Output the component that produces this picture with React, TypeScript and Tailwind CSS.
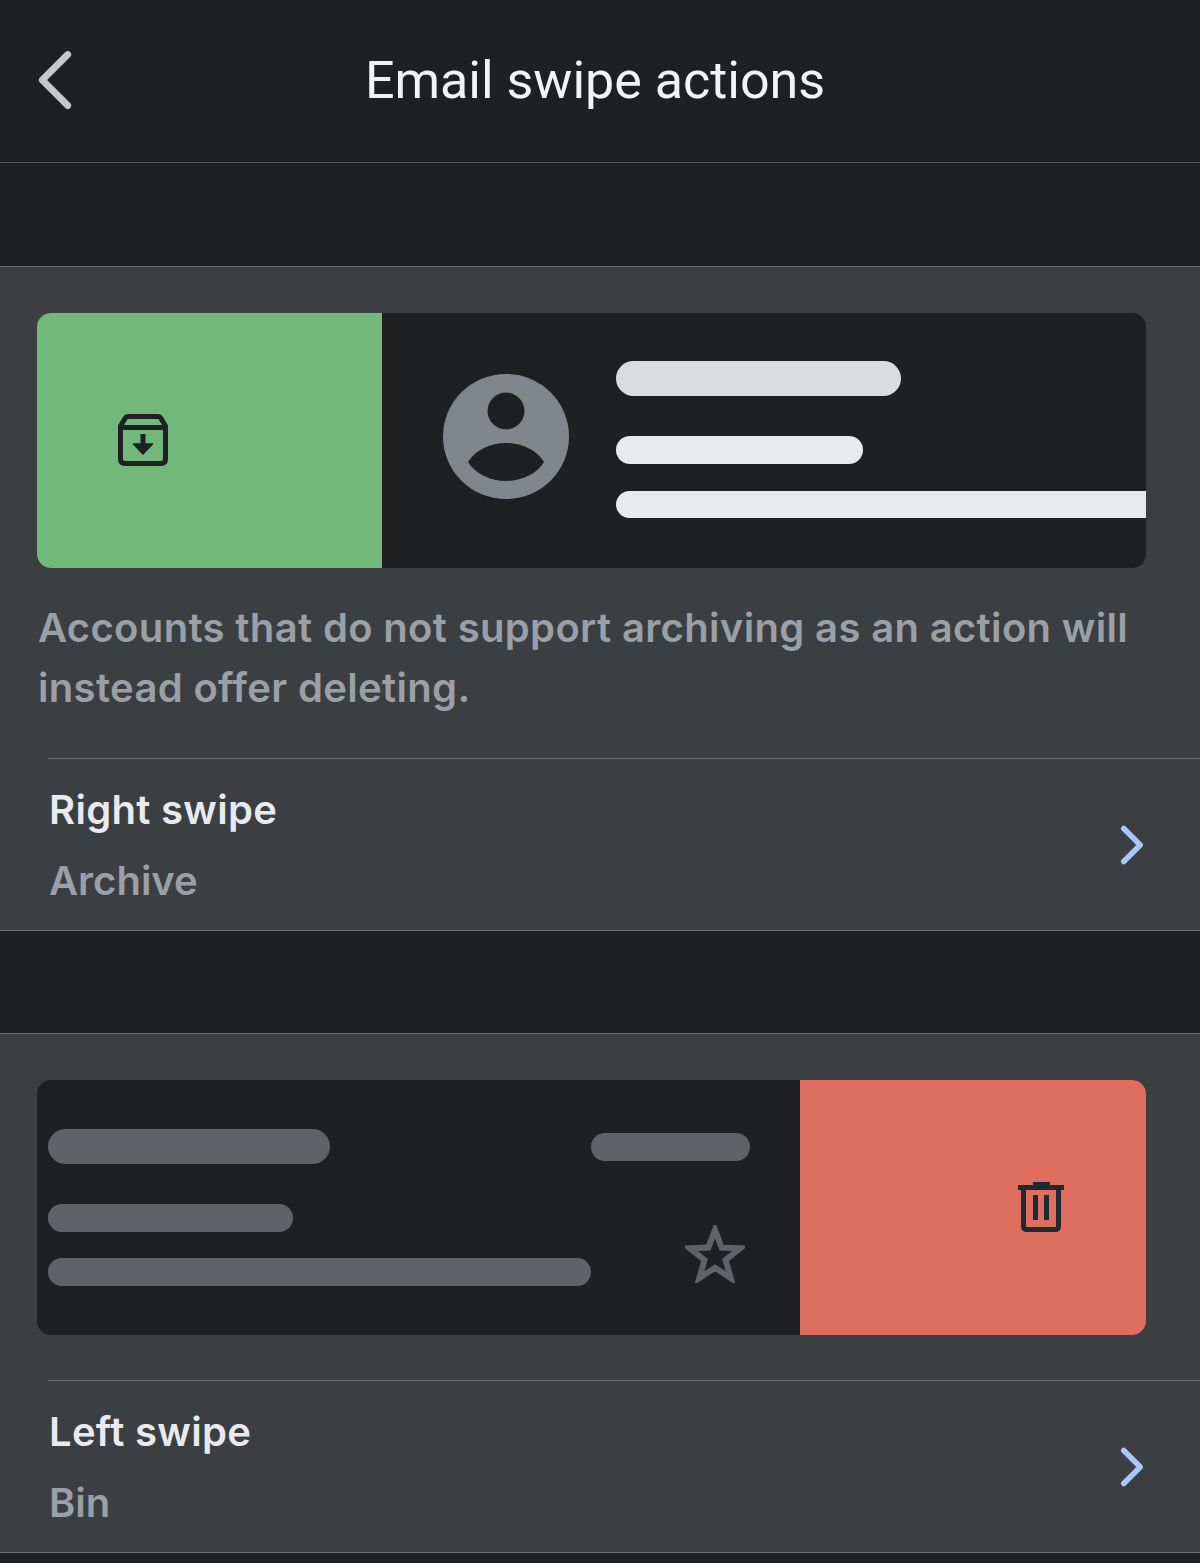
import { ChevronLeft, ChevronRight } from 'lucide-react';

const ArchiveIcon = () => (
  <svg viewBox="0 0 52 52" className="w-[52px] h-[52px] mt-[-1px]" fill="none">
    <path d="M3.5 12 L8 4.5 Q9 2.5 11.5 2.5 H40.5 Q43 2.5 44 4.5 L48.5 12 V45 Q48.5 49.5 44 49.5 H8 Q3.5 49.5 3.5 45 Z" stroke="#202124" strokeWidth="5" strokeLinejoin="round" />
    <path d="M4 13.5 H48" stroke="#202124" strokeWidth="5" />
    <path d="M26 20 V32" stroke="#202124" strokeWidth="5" />
    <path d="M16.5 30 H35.5 L26 40 Z" fill="#202124" stroke="#202124" strokeWidth="1.5" strokeLinejoin="round" />
  </svg>
);

const TrashIcon = () => (
  <svg viewBox="0 0 46 52" className="w-[46px] h-[52px] mt-[-2px]" fill="none">
    <path d="M0 4 H46 V9 H0 Z M15 1 H32 V4 H15 Z" fill="#1f2a30" />
    <path d="M5.5 8 V45 Q5.5 48.5 9 48.5 H37 Q40.5 48.5 40.5 45 V8" stroke="#1f2a30" strokeWidth="5" />
    <path d="M17.5 14 V39 M28.5 14 V39" stroke="#1f2a30" strokeWidth="5" />
  </svg>
);

const Avatar = () => (
  <svg viewBox="0 0 126 125" className="w-[126px] h-[125px] shrink-0">
    <ellipse cx="63" cy="62.5" rx="63" ry="62.5" fill="#80868b" />
    <ellipse cx="63" cy="37" rx="18.5" ry="18.5" fill="#1f2022" />
    <path d="M25 88 C32 76 48 69 63 69 C78 69 94 76 101 88 C94 100 78 107 63 107 C48 107 32 100 25 88 Z" fill="#1f2022" />
  </svg>
);

const Star = () => (
  <svg viewBox="0 0 60 58" className="w-[60px] h-[58px]" fill="none">
    <path d="M30 5 L36.6 22.6 L55 23.4 L40.6 35 L45.6 53 L30 42.8 L14.4 53 L19.4 35 L5 23.4 L23.4 22.6 Z" stroke="#5f6368" strokeWidth="6" strokeLinejoin="miter" />
  </svg>
);

const SwipeRow = ({ title, value }: { title: string; value: string }) => (
  <div className="ml-12 border-t border-[#6b6f73] h-[172px] flex items-center justify-between pr-[48px]">
    <div className="pl-[1px] pt-[2px] font-['Inter',sans-serif]">
      <div className="text-[40px] leading-[50px] font-semibold tracking-[0.3px] text-[#e8eaed]">{title}</div>
      <div className="text-[40px] leading-[50px] font-semibold text-[#9aa0a6] mt-[21px]">{value}</div>
    </div>
    <ChevronRight className="w-[66px] h-[66px] text-[#a8c7fa] mr-[-13px]" strokeWidth={2} />
  </div>
);

export default function App() {
  return (
    <div className="w-[1200px] h-[1563px] overflow-hidden bg-[#1f2022] font-['Roboto',sans-serif]">
      {/* Header */}
      <div className="relative h-[163px] border-b border-[#55585c] flex items-center justify-center">
        <ChevronLeft className="absolute left-[4px] top-[29px] w-[102px] h-[102px] text-[#c4c7cc]" strokeWidth={1.6} />
        <span className="text-[52px] text-[#f1f3f4] ml-[-10px]">Email swipe actions</span>
      </div>

      <div className="h-[103px]" />

      {/* Right swipe */}
      <div className="bg-[#3b3f42] border-y border-[#6b6f73]">
        <div className="pt-[46px] pl-[37px] pr-[54px]">
          <div className="h-[255px] rounded-[14px] overflow-hidden flex bg-[#1f2022]">
            <div className="w-[345px] bg-[#71b87a] flex items-center pl-[80px]">
              <ArchiveIcon />
            </div>
            <div className="flex-1 flex pl-[61px]">
              <div className="mt-[61px]">
                <Avatar />
              </div>
              <div className="flex-1 ml-[47px] pt-[48px]">
                <div className="w-[285px] h-[35px] rounded-full bg-[#dadce0]" />
                <div className="w-[247px] h-[28px] rounded-full bg-[#e8eaed] mt-[40px]" />
                <div className="h-[27px] rounded-l-full bg-[#e8eaed] mt-[27px]" />
              </div>
            </div>
          </div>
        </div>
        <p className="pl-[38px] pr-[50px] mt-[30px] mb-[40px] text-[40px] leading-[60px] tracking-[0.34px] font-semibold font-['Inter',sans-serif] text-[#9aa0a6]">
          Accounts that do not support archiving as an action will instead offer deleting.
        </p>
        <SwipeRow title="Right swipe" value="Archive" />
      </div>

      <div className="h-[102px]" />

      {/* Left swipe */}
      <div className="bg-[#3b3f42] border-y border-[#6b6f73]">
        <div className="pt-[46px] pl-[37px] pr-[54px] pb-[45px]">
          <div className="h-[255px] rounded-[14px] overflow-hidden flex bg-[#1f2022]">
            <div className="w-[763px] pl-[11px] pr-[50px] pt-[49px]">
              <div className="flex items-center justify-between">
                <div className="w-[282px] h-[35px] rounded-full bg-[#5f6368]" />
                <div className="w-[159px] h-[28px] rounded-full bg-[#5f6368]" />
              </div>
              <div className="flex justify-between">
                <div className="mt-[40px]">
                  <div className="w-[245px] h-[28px] rounded-full bg-[#5f6368]" />
                  <div className="w-[543px] h-[28px] rounded-full bg-[#5f6368] mt-[26px]" />
                </div>
                <div className="mt-[61px] mr-[5px]">
                  <Star />
                </div>
              </div>
            </div>
            <div className="flex-1 bg-[#dd6e60] flex items-center pl-[218px]">
              <TrashIcon />
            </div>
          </div>
        </div>
        <SwipeRow title="Left swipe" value="Bin" />
      </div>
    </div>
  );
}
